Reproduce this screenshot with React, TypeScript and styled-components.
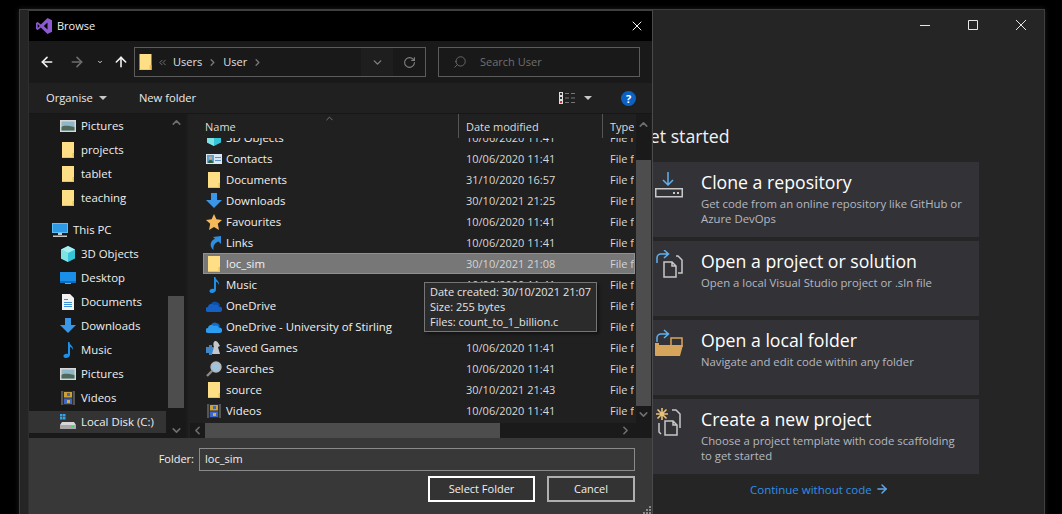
import React from 'react';
import styled, { createGlobalStyle } from 'styled-components';
import { ArrowLeft, ArrowRight, ArrowUp, ChevronDown, ChevronLeft, ChevronRight, ChevronUp, ChevronsLeft, RotateCw, Search, X } from 'lucide-react';

const FONT = `'Open Sans', 'Noto Sans', sans-serif`;

const GlobalStyle = createGlobalStyle`
  html, body { margin: 0; height: 100%; background: #000; }
  #root { height: 100%; }
  * { box-sizing: border-box; }
`;

const Page = styled.div`
  height: 100%;
  background: #000;
  padding: 9px 17px 0 19px;
  overflow: hidden;
  display: flex;
  font-family: ${FONT};
  font-size: 11px;
`;

const VsWindow = styled.div`
  position: relative;
  flex: 1;
  height: 520px;
  background: #252526;
  border: 1px solid #3f3f41;
  box-shadow: 0 0 5px rgba(255, 255, 255, 0.12);
`;

const WindowControls = styled.div`
  display: flex;
  justify-content: flex-end;
  height: 30px;
  margin-right: -1px;
`;

const ControlButton = styled.div`
  width: 48px;
  display: flex;
  align-items: center;
  justify-content: center;
  color: #e6e6e6;
`;

const StartColumn = styled.section`
  margin: 83px 0 0 617px;
  width: 342px;
`;

const StartHeading = styled.h2`
  margin: 0 0 13px;
  height: 26px;
  font-size: 17.7px;
  line-height: 26px;
  font-weight: 400;
  color: #f1f1f1;
`;

const ActionCard = styled.div`
  height: 75px;
  margin-bottom: 4px;
  background: #333337;
  padding: 7px 0 0 18px;
  display: grid;
  grid-template-columns: 28px 1fr;
  column-gap: 18px;
`;

const CardIcon = styled.div`
  padding-top: 2px;
  height: 28px;
`;

const CardTitle = styled.div`
  font-size: 17.7px;
  line-height: 26px;
  color: #fff;
`;

const CardText = styled.div`
  margin-top: 1px;
  font-size: 11.35px;
  line-height: 15px;
  color: #b4b8c0;
  width: 264px;
`;

const ContinueLink = styled.div`
  margin-top: 6px;
  padding-left: 113px;
  display: flex;
  align-items: center;
  gap: 3px;
  height: 18px;
  font-size: 11.5px;
  color: #2f8fe6;
`;

const Dialog = styled.div`
  position: absolute;
  left: 8px;
  top: 0;
  width: 625px;
  height: 510px;
  display: flex;
  flex-direction: column;
  background: #383838;
  border-top: 1px solid #3f3f41;
  border-right: 1px solid #4a4a4c;
  border-left: 1px solid #2f2f2f;
`;

// nudges a line of text up by a pixel inside a centred row
const Label = styled.span`
  padding-bottom: 2px;
`;

const TitleBar = styled.header`
  height: 30px;
  flex: none;
  background: #000;
  display: flex;
  align-items: center;
  padding: 0 7px;
  gap: 5px;
  color: #f0f0f0;
`;

const TitleText = styled(Label)`
  flex: 1;
`;

const NavBar = styled.div`
  height: 42px;
  flex: none;
  background: #191919;
  display: flex;
  align-items: center;
  padding: 0 12px 0 8px;
`;

const NavButton = styled.div<{ $w: number; $dim?: boolean; $pad?: number }>`
  width: ${({ $w }) => $w}px;
  padding-left: ${({ $pad }) => $pad ?? 0}px;
  display: flex;
  justify-content: center;
  color: ${({ $dim }) => ($dim ? '#6e6e6e' : '#f2f2f2')};
`;

const AddressBox = styled.div`
  width: 292px;
  height: 30px;
  border: 1px solid #5c5c5c;
  display: flex;
  align-items: center;
  padding-left: 4px;
  color: #e0e0e0;
`;

const Crumbs = styled.div`
  flex: 1;
  display: flex;
  align-items: center;
  gap: 5px;
  margin-left: 5px;
`;

const CrumbSep = styled.span`
  display: flex;
  color: #777;
`;

const AddressAction = styled.div<{ $shaded?: boolean }>`
  width: 32px;
  height: 100%;
  display: flex;
  align-items: center;
  justify-content: center;
  color: #808080;
  background: ${({ $shaded }) => ($shaded ? '#1e1e1e' : 'transparent')};
`;

const SearchBox = styled.div`
  margin-left: 12px;
  flex: 1;
  height: 30px;
  border: 1px solid #5c5c5c;
  display: flex;
  align-items: center;
  padding-left: 14px;
  gap: 13px;
  color: #707070;
  svg { transform: scaleX(-1); }
`;

const CommandBar = styled.div`
  height: 30px;
  flex: none;
  background: #202020;
  display: flex;
  align-items: center;
  padding: 0 16px 0 17px;
  color: #eaeaea;
`;

const Command = styled.span`
  margin-right: 32px;
  display: flex;
  align-items: center;
  gap: 6px;
  font-size: 11.2px;
`;

const Caret = styled.span`
  width: 0;
  height: 0;
  border-left: 4px solid transparent;
  border-right: 4px solid transparent;
  border-top: 4px solid #c8c8c8;
`;

const ViewTools = styled.div`
  margin-left: auto;
  display: flex;
  align-items: center;
  gap: 9px;
`;

const HelpBadge = styled.span`
  margin-left: 20px;
  width: 15px;
  height: 15px;
  border-radius: 50%;
  background: #0b62c4;
  color: #fff;
  font-size: 11px;
  font-weight: 700;
  line-height: 15px;
  text-align: center;
`;

const Content = styled.div`
  height: 325px;
  flex: none;
  display: flex;
  border-top: 1px solid #161616;
`;

const Sidebar = styled.nav`
  width: 157px;
  flex: none;
  display: flex;
  background: #191919;
`;

const SideList = styled.div`
  width: 139px;
  flex: none;
  padding-right: 2px;
  overflow: hidden;
`;

const SideRow = styled.div<{ $indent: number; $active?: boolean; $gap?: boolean }>`
  height: 24px;
  margin-top: ${({ $gap }) => ($gap ? '8px' : '0')};
  padding-left: ${({ $indent }) => $indent}px;
  border-top: 1px solid transparent;
  border-bottom: 1px solid transparent;
  background: ${({ $active }) => ($active ? '#333' : 'transparent')};
  background-clip: padding-box;
  display: flex;
  align-items: center;
  gap: 5px;
  color: #efefef;
  font-size: 11.4px;
  white-space: nowrap;
`;

const VScroll = styled.div<{ $w: number; $bg: string }>`
  width: ${({ $w }) => $w}px;
  flex: none;
  display: flex;
  flex-direction: column;
  align-items: stretch;
  background: ${({ $bg }) => $bg};
  color: #6e6e6e;
`;

const VThumb = styled.div<{ $top: number; $height: number }>`
  margin-top: ${({ $top }) => $top}px;
  height: ${({ $height }) => $height}px;
  background: #4d4d4d;
  flex: none;
`;

const ScrollArrow = styled.div<{ $h: number; $end?: boolean }>`
  height: ${({ $h }) => $h}px;
  flex: none;
  display: flex;
  align-items: ${({ $end }) => ($end ? 'flex-end' : 'center')};
  justify-content: center;
`;

const ListPane = styled.div`
  flex: 1;
  display: flex;
  background: #202020;
  position: relative;
  border-left: 2px solid #1c1c1c;
`;

const ListMain = styled.div`
  width: 448px;
  flex: none;
  display: flex;
  flex-direction: column;
`;

const ListHeader = styled.div`
  position: relative;
  height: 24px;
  flex: none;
  display: flex;
  padding-left: 17px;
  color: #dcdcdc;
`;

const HeaderCell = styled.div<{ $w: number; $last?: boolean }>`
  width: ${({ $w }) => $w}px;
  padding: 5px 0 0 7px;
  border-right: ${({ $last }) => ($last ? 'none' : '1px solid #555')};
  white-space: nowrap;
  overflow: hidden;
`;

const NameCell = styled(HeaderCell)`
  padding-left: 0;
`;

const SortMark = styled.div`
  position: absolute;
  left: 136px;
  top: -2px;
  color: #9a9a9a;
`;

const RowViewport = styled.div`
  flex: 1;
  overflow: hidden;
  padding-left: 15px;
`;

const RowStack = styled.div`
  margin-top: -11px;
  width: 432px;
`;

const FileRow = styled.div<{ $selected?: boolean }>`
  height: 21px;
  display: grid;
  grid-template-columns: 263px 144px 24px;
  align-items: center;
  white-space: nowrap;
  color: ${({ $selected }) => ($selected ? '#d4d4d4' : '#d8d8d8')};
  background: ${({ $selected }) => ($selected ? '#777' : 'transparent')};
  box-shadow: ${({ $selected }) => ($selected ? 'inset 0 0 0 1px #909090' : 'none')};
`;

const FileName = styled.div`
  display: flex;
  align-items: center;
  gap: 4px;
  padding-left: 3px;
  font-size: 11.4px;
  color: #f0f0f0;
`;

const TypeCell = styled.span`
  overflow: hidden;
`;

const HScroll = styled.div`
  height: 15px;
  flex: none;
  margin-left: 2px;
  display: flex;
  background: #1a1a1a;
  color: #6e6e6e;
`;

const HThumb = styled.div`
  width: 295px;
  background: #4d4d4d;
`;

const HArrow = styled.div<{ $end?: boolean }>`
  width: 15px;
  display: flex;
  align-items: center;
  justify-content: center;
  margin-left: ${({ $end }) => ($end ? 'auto' : '0')};
  margin-right: ${({ $end }) => ($end ? '3px' : '0')};
`;

const Tooltip = styled.div`
  position: absolute;
  left: 236px;
  top: 168px;
  width: 173px;
  height: 50px;
  padding: 1px 5px;
  background: #2b2b2b;
  border: 1px solid #767676;
  box-shadow: 2px 2px 3px rgba(0, 0, 0, 0.45);
  color: #e4e4e4;
  font-size: 11px;
  line-height: 15px;
  white-space: nowrap;
`;

const Footer = styled.footer`
  position: relative;
  flex: 1;
  padding: 10px 17px 0 0;
  display: flex;
  flex-direction: column;
  gap: 5px;
  color: #f0f0f0;
`;

const FolderRow = styled.div`
  display: flex;
  justify-content: flex-end;
  align-items: center;
  gap: 5px;
`;

const FolderInput = styled.div`
  width: 436px;
  height: 23px;
  border: 1px solid #8a8a8a;
  padding-left: 5px;
  line-height: 19px;
`;

const ButtonRow = styled.div`
  display: flex;
  justify-content: flex-end;
  gap: 12px;
`;

const DialogButton = styled.div<{ $primary?: boolean; $w: number }>`
  width: ${({ $w }) => $w}px;
  height: 26px;
  border: 2px solid ${({ $primary }) => ($primary ? '#fff' : '#b0b0b0')};
  background: #333;
  padding-bottom: 2px;
  display: flex;
  align-items: center;
  justify-content: center;
`;

const Grip = styled.svg`
  position: absolute;
  right: 0;
  bottom: 5px;
`;

const FolderIcon = () => (
  <svg width="13" height="16" viewBox="0 0 13 16" style={{ flex: 'none' }}>
    <rect x="0.5" y="0" width="12" height="16" fill="#fedf85" />
    <path d="M0.5 15.2H12.5V16H0.5ZM10.5 11H12.5V16H10.5Z" fill="#f3c24c" />
  </svg>
);

const glyphs: Record<string, React.ReactNode> = {
  folder: (
    <>
      <rect x="2" y="0" width="12" height="16" fill="#fedf85" />
      <path d="M2 15h12v1H2zM12.5 11H14v5h-1.5z" fill="#f3c24c" />
    </>
  ),
  pictures: (
    <>
      <rect x="0" y="2" width="16" height="12" fill="#d8d8d8" />
      <rect x="1.5" y="3.5" width="13" height="9" fill="#8fb7c9" />
      <path d="M1.5 9c3-2 7-1 13 0v3.5h-13z" fill="#4f6a5a" />
    </>
  ),
  pc: (
    <>
      <rect x="0" y="1" width="16" height="10" fill="#58c0f5" />
      <rect x="1" y="2" width="14" height="8" fill="#2e9ae6" />
      <path d="M6 11h4v2H6zM1 13.5h14V15H1z" fill="#c8c8c8" />
    </>
  ),
  cube: (
    <>
      <path d="M8 0l7 3.5v9L8 16l-7-3.5v-9z" fill="#35c5d8" />
      <path d="M8 0l7 3.5L8 7 1 3.5z" fill="#a8f0f0" />
      <path d="M1 3.5L8 7v9l-7-3.5z" fill="#7fe3e6" />
    </>
  ),
  desktop: (
    <>
      <rect x="0" y="2" width="16" height="11" fill="#1a8fe8" />
      <rect x="0" y="11" width="16" height="2" fill="#0c6cc0" />
      <rect x="5" y="13" width="6" height="1" fill="#9a9a9a" />
    </>
  ),
  document: (
    <>
      <path d="M2 0h8l4 4v12H2z" fill="#f2f2f2" />
      <path d="M4 5h4v1H4zM4 8h8v1H4zM4 10h8v1H4zM4 12h8v1H4z" fill="#3c8fd8" />
    </>
  ),
  downloads: <path d="M5 0h6v7h5l-8 8-8-8h5z" fill="#3a96e6" />,
  music: <path d="M8 0h1.5c0 3 4 3.5 3.5 8-.7-2-2-3-3-3.2V12.5C10 15 7.5 16 6 16c-2 0-2.5-1-2.5-2 0-1.5 2-2.6 4.5-2z" fill="#1e90e8" />,
  videos: (
    <>
      <rect x="1" y="1" width="14" height="14" fill="#2e2e2e" />
      <path d="M1 1h2v14H1zM13 1h2v14h-2z" fill="#555" />
      <rect x="4" y="2" width="8" height="5.5" fill="#c9a23a" />
      <rect x="4" y="8.5" width="8" height="5.5" fill="#3f66c9" />
      <rect x="7" y="3" width="3" height="3" fill="#3f66c9" />
      <rect x="7" y="10" width="3" height="3" fill="#d0b040" />
    </>
  ),
  disk: (
    <>
      <path d="M0 0h2.5v2.5H0zM3 0h2.5v2.5H3zM0 3h2.5v2.5H0zM3 3h2.5v2.5H3z" fill="#2aa5ee" />
      <path d="M2 8h12l2 3v4H0v-4z" fill="#d8d8d8" />
      <rect x="0" y="11" width="16" height="4" fill="#a8a8a8" />
      <rect x="11" y="12" width="3" height="1.5" fill="#3ddc6a" />
    </>
  ),
  contacts: (
    <>
      <rect x="0" y="3" width="16" height="10" fill="#d8e8f5" />
      <rect x="1" y="4" width="7" height="8" fill="#5a9fd6" />
      <circle cx="4.5" cy="7" r="1.8" fill="#c9a888" />
      <path d="M2 12c0-4 5-4 5 0z" fill="#2f5f3f" />
      <path d="M9 6h6v1H9zM9 9h6v1H9z" fill="#5a8fc6" />
    </>
  ),
  star: <path d="M8 0l2.4 5.3 5.6.6-4.2 3.8L13 16 8 12.9 3 16l1.2-6.3L0 5.9l5.6-.6z" fill="#f5b95a" />,
  links: <path d="M15 1v8l-2.5-2.5C9 8 7 10 7.5 15 3.5 12 3.5 6 9 3.8L7 2z" fill="#2f8fdf" />,
  onedriveDark: (
    <>
      <path d="M5 6a5 5 0 0 1 9 1l-4 4z" fill="#0f4fa8" />
      <path d="M2 14a2.5 2.5 0 0 1 0-5 3.5 3.5 0 0 1 6-2 4 4 0 0 1 5 1.5 2.8 2.8 0 0 1 1 5.5z" fill="#1560c4" />
    </>
  ),
  onedrive: (
    <>
      <path d="M5 6a5 5 0 0 1 9 1l-4 4z" fill="#0f6fc8" />
      <path d="M2 14a2.5 2.5 0 0 1 0-5 3.5 3.5 0 0 1 6-2 4 4 0 0 1 5 1.5 2.8 2.8 0 0 1 1 5.5z" fill="#2b9cf0" />
    </>
  ),
  games: (
    <>
      <path d="M0 7h3V5h3v2h2v6H6v2H3v-2H0z" fill="#3f86c8" />
      <path d="M9 1c2 0 3 1 5 5l-2 1 2 7H6l2-7C7 5 7 2 9 1z" fill="#c4c8cc" />
    </>
  ),
  searches: (
    <>
      <circle cx="10" cy="6" r="5" fill="#9fc4dc" stroke="#b8b8b8" strokeWidth="1.4" />
      <path d="M6.5 9.5L1 15" stroke="#8a8a8a" strokeWidth="2.4" />
    </>
  ),
};

const FileIcon = ({ name }: { name: string }) => (
  <svg width="16" height="16" viewBox="0 0 16 16" style={{ flex: 'none' }}>
    {glyphs[name]}
  </svg>
);

const VsLogo = () => (
  <svg width="16" height="16" viewBox="0 0 16 16" style={{ flex: 'none' }}>
    <path
      fillRule="evenodd"
      d="M11.5 0L16 2.2v11.6L11.5 16 4.8 9.5 1.7 12 0 11V5l1.7-1 3.1 2.5zM11.5 4.5L7.8 8l3.7 3.5zM1.7 6v4l2-2z"
      fill="#8c5ad0"
    />
  </svg>
);

const CloneGlyph = () => (
  <svg width="28" height="28" viewBox="0 0 28 28" fill="none">
    <path d="M13 1v13M8 9l5 5 5-5" stroke="#62b0ee" strokeWidth="1.5" />
    <rect x="0.75" y="17.75" width="26.5" height="8" stroke="#c8c8c8" strokeWidth="1.5" />
    <path d="M18 21h2v2h-2zM22 21h2v2h-2z" fill="#c8c8c8" />
  </svg>
);

const OpenProjectGlyph = () => (
  <svg width="28" height="28" viewBox="0 0 28 28" fill="none">
    <path d="M2 13V8c0-2.5 2-4 4-4h7M9 0l4.5 4L9 8" stroke="#62b0ee" strokeWidth="1.5" />
    <path d="M9 12h8l4 4v11H9zM17 12v4h4M21 6h2l4 4v13h-4" stroke="#c8c8c8" strokeWidth="1.5" />
  </svg>
);

const OpenFolderGlyph = () => (
  <svg width="28" height="28" viewBox="0 0 28 28" fill="none">
    <path d="M2 13V9c0-2.5 2-4 4-4h7M9 1l4.5 4L9 9" stroke="#62b0ee" strokeWidth="1.5" />
    <path d="M16 9h11v8H16z" stroke="#d7a45c" strokeWidth="1.5" />
    <path d="M4 16h24l-3 11H0z" fill="#d7a45c" />
    <path d="M0 14h4v12H0z" fill="#d7a45c" />
  </svg>
);

const NewProjectGlyph = () => (
  <svg width="28" height="28" viewBox="0 0 28 28" fill="none">
    <path d="M7 0v12M1 6h12M2.5 1.5l9 9M11.5 1.5l-9 9" stroke="#e8c27a" strokeWidth="1.6" />
    <path d="M10 13h8l4 4v10H10zM18 13v4h4M17 2h4l4 4v14M4 15v9l2 2" stroke="#c8c8c8" strokeWidth="1.5" />
  </svg>
);

const WinGlyph = ({ d }: { d: string }) => (
  <svg width="12" height="12" viewBox="0 0 12 12" fill="none">
    <path d={d} stroke="currentColor" strokeWidth="1" />
  </svg>
);

const sideItems = [
  { label: 'Pictures', icon: 'pictures', indent: 31 },
  { label: 'projects', icon: 'folder', indent: 31 },
  { label: 'tablet', icon: 'folder', indent: 31 },
  { label: 'teaching', icon: 'folder', indent: 31 },
  { label: 'This PC', icon: 'pc', indent: 23, gap: true },
  { label: '3D Objects', icon: 'cube', indent: 31 },
  { label: 'Desktop', icon: 'desktop', indent: 31 },
  { label: 'Documents', icon: 'document', indent: 31 },
  { label: 'Downloads', icon: 'downloads', indent: 31 },
  { label: 'Music', icon: 'music', indent: 31 },
  { label: 'Pictures', icon: 'pictures', indent: 31 },
  { label: 'Videos', icon: 'videos', indent: 31 },
  { label: 'Local Disk (C:)', icon: 'disk', indent: 31, active: true },
];

const files = [
  { name: '3D Objects', icon: 'cube', date: '10/06/2020 11:41' },
  { name: 'Contacts', icon: 'contacts', date: '10/06/2020 11:41' },
  { name: 'Documents', icon: 'folder', date: '31/10/2020 16:57' },
  { name: 'Downloads', icon: 'downloads', date: '30/10/2021 21:25' },
  { name: 'Favourites', icon: 'star', date: '10/06/2020 11:41' },
  { name: 'Links', icon: 'links', date: '10/06/2020 11:41' },
  { name: 'loc_sim', icon: 'folder', date: '30/10/2021 21:08', selected: true },
  { name: 'Music', icon: 'music', date: '10/06/2020 11:41' },
  { name: 'OneDrive', icon: 'onedriveDark', date: '10/06/2020 11:41' },
  { name: 'OneDrive - University of Stirling', icon: 'onedrive', date: '10/06/2020 11:41' },
  { name: 'Saved Games', icon: 'games', date: '10/06/2020 11:41' },
  { name: 'Searches', icon: 'searches', date: '10/06/2020 11:41' },
  { name: 'source', icon: 'folder', date: '30/10/2021 21:43' },
  { name: 'Videos', icon: 'videos', date: '10/06/2020 11:41' },
];

const actions = [
  { title: 'Clone a repository', text: 'Get code from an online repository like GitHub or Azure DevOps', icon: <CloneGlyph /> },
  { title: 'Open a project or solution', text: 'Open a local Visual Studio project or .sln file', icon: <OpenProjectGlyph /> },
  { title: 'Open a local folder', text: 'Navigate and edit code within any folder', icon: <OpenFolderGlyph /> },
  { title: 'Create a new project', text: 'Choose a project template with code scaffolding to get started', icon: <NewProjectGlyph /> },
];

const App: React.FC = () => {
  return (
    <>
      <GlobalStyle />
      <Page>
        <VsWindow>
          <WindowControls>
            <ControlButton><WinGlyph d="M1 6.5H11" /></ControlButton>
            <ControlButton><WinGlyph d="M1.5 1.5H10.5V10.5H1.5Z" /></ControlButton>
            <ControlButton><WinGlyph d="M1 1L11 11M11 1L1 11" /></ControlButton>
          </WindowControls>

          <StartColumn>
            <StartHeading>Get started</StartHeading>
            {actions.map((action) => (
              <ActionCard key={action.title}>
                <CardIcon>{action.icon}</CardIcon>
                <div>
                  <CardTitle>{action.title}</CardTitle>
                  <CardText>{action.text}</CardText>
                </div>
              </ActionCard>
            ))}
            <ContinueLink>
              Continue without code
              <ArrowRight size={14} strokeWidth={2.5} color="#62a8e8" />
            </ContinueLink>
          </StartColumn>

          <Dialog>
            <TitleBar>
              <VsLogo />
              <TitleText>Browse</TitleText>
              <X size={16} strokeWidth={1.5} color="#f2f2f2" />
            </TitleBar>

            <NavBar>
              <NavButton $w={20}><ArrowLeft size={16} strokeWidth={2.4} /></NavButton>
              <NavButton $w={40} $dim><ArrowRight size={16} strokeWidth={2.4} /></NavButton>
              <NavButton $w={6}><ChevronDown size={10} strokeWidth={3.5} /></NavButton>
              <NavButton $w={31} $pad={5}><ArrowUp size={16} strokeWidth={2.4} /></NavButton>
              <AddressBox>
                <FolderIcon />
                <Crumbs>
                  <CrumbSep><ChevronsLeft size={11} /></CrumbSep>
                  <Label>Users</Label>
                  <CrumbSep><ChevronRight size={11} strokeWidth={3} /></CrumbSep>
                  <Label>User</Label>
                  <CrumbSep><ChevronRight size={11} strokeWidth={3} /></CrumbSep>
                </Crumbs>
                <AddressAction $shaded><ChevronDown size={13} strokeWidth={2.5} /></AddressAction>
                <AddressAction><RotateCw size={13} strokeWidth={2} /></AddressAction>
              </AddressBox>
              <SearchBox>
                <Search size={14} strokeWidth={1.5} />
                <Label>Search User</Label>
              </SearchBox>
            </NavBar>

            <CommandBar>
              <Command><Label>Organise</Label> <Caret /></Command>
              <Command><Label>New folder</Label></Command>
              <ViewTools>
                <svg width="16" height="12" viewBox="0 0 16 12">
                  <rect width="4" height="12" fill="#ddd" />
                  <path d="M1 1h2v2H1zM1 5h2v2H1z" fill="#333" />
                  <rect x="1" y="9" width="2" height="2" fill="#c33" />
                  <path d="M6 1.5h4M12 1.5h4M6 6h4M12 6h4M6 10.5h4M12 10.5h4" stroke="#777" />
                </svg>
                <Caret />
                <HelpBadge>?</HelpBadge>
              </ViewTools>
            </CommandBar>

            <Content>
              <Sidebar>
                <SideList>
                  {sideItems.map((item, i) => (
                    <SideRow key={i} $indent={item.indent} $gap={item.gap} $active={item.active}>
                      <FileIcon name={item.icon} />
                      <Label>{item.label}</Label>
                    </SideRow>
                  ))}
                </SideList>
                <VScroll $w={16} $bg="#191919">
                  <ScrollArrow $h={16}><ChevronUp size={13} strokeWidth={3} /></ScrollArrow>
                  <VThumb $top={166} $height={112} />
                  <ScrollArrow $h={29} $end><ChevronDown size={13} strokeWidth={3} /></ScrollArrow>
                </VScroll>
              </Sidebar>

              <ListPane>
                <ListMain>
                  <ListHeader>
                    <NameCell $w={254}>Name</NameCell>
                    <HeaderCell $w={144}>Date modified</HeaderCell>
                    <HeaderCell $w={31} $last>Type</HeaderCell>
                    <SortMark><ChevronUp size={11} strokeWidth={1.5} /></SortMark>
                  </ListHeader>
                  <RowViewport>
                    <RowStack>
                      {files.map((file) => (
                        <FileRow key={file.name} $selected={file.selected}>
                          <FileName>
                            <FileIcon name={file.icon} />
                            <span>{file.name}</span>
                          </FileName>
                          <span>{file.date}</span>
                          <TypeCell>File folder</TypeCell>
                        </FileRow>
                      ))}
                    </RowStack>
                  </RowViewport>
                  <HScroll>
                    <HArrow><ChevronLeft size={13} strokeWidth={3} /></HArrow>
                    <HThumb />
                    <HArrow $end><ChevronRight size={13} strokeWidth={3} /></HArrow>
                  </HScroll>
                </ListMain>
                <VScroll $w={15} $bg="#1a1a1a">
                  <ScrollArrow $h={20}><ChevronUp size={13} strokeWidth={3} /></ScrollArrow>
                  <VThumb $top={26} $height={246} />
                  <ScrollArrow $h={16}><ChevronDown size={13} strokeWidth={3} /></ScrollArrow>
                </VScroll>
                <Tooltip>
                  Date created: 30/10/2021 21:07<br />
                  Size: 255 bytes<br />
                  Files: count_to_1_billion.c
                </Tooltip>
              </ListPane>
            </Content>

            <Footer>
              <FolderRow>
                <Label>Folder:</Label>
                <FolderInput>loc_sim</FolderInput>
              </FolderRow>
              <ButtonRow>
                <DialogButton $primary $w={107}>Select Folder</DialogButton>
                <DialogButton $w={88}>Cancel</DialogButton>
              </ButtonRow>
              <Grip width="10" height="10" viewBox="0 0 10 10">
                <path d="M7 1h2v2H7zM4 4h2v2H4zM7 4h2v2H7zM1 7h2v2H1zM4 7h2v2H4zM7 7h2v2H7z" fill="#8a8a8a" />
              </Grip>
            </Footer>
          </Dialog>
        </VsWindow>
      </Page>
    </>
  );
};

export default App;
